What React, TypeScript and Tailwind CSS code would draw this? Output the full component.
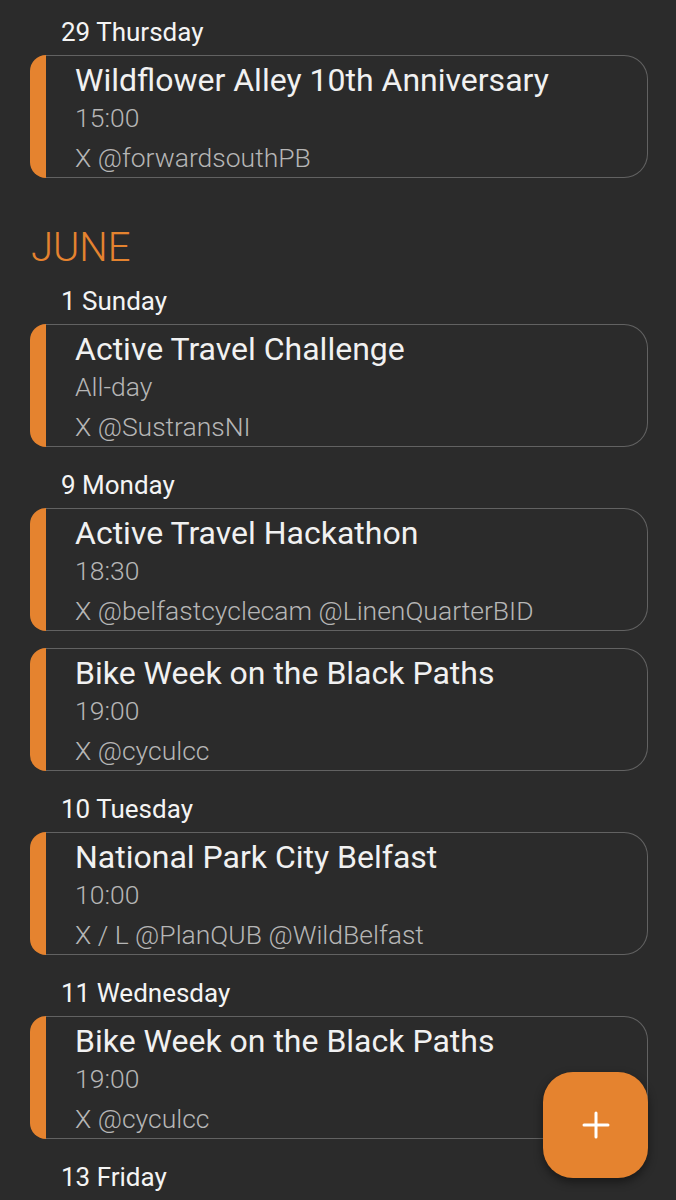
import React from 'react';

type Ev = { title: string; time: string; handle: string };
type Day = { label: string; events: Ev[] };
type Section = { month?: string; days: Day[] };

const sections: Section[] = [
    {
        days: [
            { label: '29 Thursday', events: [{ title: 'Wildflower Alley 10th Anniversary', time: '15:00', handle: 'X @forwardsouthPB' }] },
        ],
    },
    {
        month: 'JUNE',
        days: [
            { label: '1 Sunday', events: [{ title: 'Active Travel Challenge', time: 'All-day', handle: 'X @SustransNI' }] },
            {
                label: '9 Monday',
                events: [
                    { title: 'Active Travel Hackathon', time: '18:30', handle: 'X @belfastcyclecam @LinenQuarterBID' },
                    { title: 'Bike Week on the Black Paths', time: '19:00', handle: 'X @cyculcc' },
                ],
            },
            { label: '10 Tuesday', events: [{ title: 'National Park City Belfast', time: '10:00', handle: 'X / L @PlanQUB @WildBelfast' }] },
            { label: '11 Wednesday', events: [{ title: 'Bike Week on the Black Paths', time: '19:00', handle: 'X @cyculcc' }] },
            { label: '13 Friday', events: [{ title: 'Bike Week on the Black Paths', time: '19:00', handle: 'X @cyculcc' }] },
        ],
    },
];

function EventCard({ ev }: { ev: Ev }) {
    return (
        <div className="flex mb-[17px] h-[123px]">
            <div className="w-[16px] shrink-0 bg-[#e5832f] rounded-l-[24px]" />
            <div className="flex-1 border-[1.5px] border-l-0 border-[#626262] rounded-r-[24px] pl-[29px] pt-[5px] overflow-hidden">
                <div className="text-[32px] leading-[38px] text-[#f1f1f1] whitespace-nowrap">{ev.title}</div>
                <div className="text-[26.5px] leading-[38px] font-light text-[#b6b6b6]">{ev.time}</div>
                <div className="text-[26.5px] leading-[41px] font-light text-[#b6b6b6] whitespace-nowrap">{ev.handle}</div>
            </div>
        </div>
    );
}

export default function App() {
    return (
        <div className="relative h-[1200px] overflow-hidden bg-[#2b2b2b]" style={{ fontFamily: 'Roboto, "Noto Sans", sans-serif' }}>
            <div className="pt-[11px] pl-[30px] pr-[28px]">
                {sections.map((s, i) => (
                    <div key={i}>
                        {s.month && (
                            <div className="pt-[30px] pb-[9px] pl-[1px] text-[40px] leading-[46px] font-light text-[#e5832f]">{s.month}</div>
                        )}
                        {s.days.map((d) => (
                            <div key={d.label}>
                                <div className="pt-[6px] pb-[8px] pl-[31px] text-[26px] leading-[30px] text-[#f4f4f4]">{d.label}</div>
                                {d.events.map((ev, j) => (
                                    <EventCard key={j} ev={ev} />
                                ))}
                            </div>
                        ))}
                    </div>
                ))}
            </div>
            <button className="absolute left-[543px] top-[1072px] w-[105px] h-[106px] rounded-[30px] bg-[#e5832f] flex items-center justify-center shadow-[0_4px_10px_rgba(0,0,0,0.45)]">
                <svg width="28" height="28" viewBox="0 0 28 28" fill="none" stroke="white" strokeWidth="3" strokeLinecap="round">
                    <path d="M14 2v24M2 14h24" />
                </svg>
            </button>
        </div>
    );
}
